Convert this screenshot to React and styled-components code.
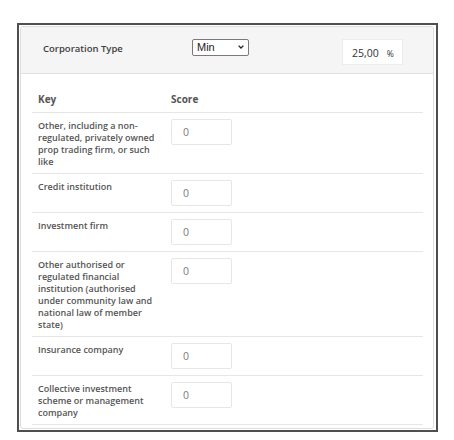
import React from "react";
import styled, { createGlobalStyle } from "styled-components";

const Global = createGlobalStyle`
  html, body {
    margin: 0;
    padding: 0;
    background: #fff;
  }
  body {
    font-family: "Open Sans", "Noto Sans", sans-serif;
  }
`;

const Frame = styled.div`
  margin: 23px 0 0 17px;
  width: 421px;
  box-sizing: border-box;
  border: 2px solid #4f4f4f;
  padding: 1px 2px 1px 1px;
  background: #fff;
`;

const Panel = styled.div`
  border: 1px solid #dedede;
  border-radius: 3px;
  overflow: hidden;
`;

const Header = styled.div`
  display: flex;
  align-items: flex-start;
  background: #f5f5f5;
  border-bottom: 1px solid #e2e2e2;
  height: 47px;
  box-sizing: border-box;
  padding: 12px 0 0 22px;
`;

const Label = styled.div`
  width: 149px;
  font-size: 9.5px;
  font-weight: 600;
  color: #3e3e3e;
  line-height: 14px;
  padding-top: 3px;
`;

const SelectWrap = styled.div`
  position: relative;
  width: 57px;
  height: 17px;
`;

const Select = styled.select`
  appearance: none;
  -webkit-appearance: none;
  display: block;
  width: 100%;
  height: 100%;
  box-sizing: border-box;
  font-family: "Liberation Sans", Arial, sans-serif;
  font-size: 11px;
  line-height: 15px;
  color: #1a1a1a;
  border: 1px solid #7a7a7a;
  border-radius: 2px;
  background: #fff;
  padding: 0 0 0 4px;
  margin: 0;
`;

const Chevron = styled.svg`
  position: absolute;
  right: 5px;
  top: 6px;
  width: 6px;
  height: 4px;
  pointer-events: none;
`;

const Percent = styled.div`
  margin-left: 93px;
  width: 61px;
  height: 26px;
  box-sizing: border-box;
  background: #fff;
  border: 1px solid #ececec;
  display: flex;
  align-items: center;
  padding: 2px 0 0 9px;
  gap: 8px;
  color: #333;
  font-size: 10.5px;
`;

const Unit = styled.span`
  font-size: 8.5px;
`;

const Body = styled.div`
  padding: 12px 10px 3px 11px;
`;

const Table = styled.table`
  width: 100%;
  border-collapse: collapse;
  table-layout: fixed;
`;

const Col = styled.col`
  width: ${(p) => p.$w || "auto"};
`;

const HeadCell = styled.th`
  text-align: left;
  font-size: 10px;
  font-weight: 700;
  color: #555;
  line-height: 14px;
  padding: 6px 6px 6px;
  border-bottom: 1px solid #e6e6e6;
`;

const Row = styled.tr`
  border-bottom: 1px solid #e6e6e6;
`;

const KeyCell = styled.td`
  vertical-align: top;
  padding: 7px 6px 5px;
  font-size: 9px;
  font-weight: 600;
  line-height: 12px;
  color: #555;
`;

const ScoreCell = styled.td`
  vertical-align: top;
  padding: 6px 6px 6px;
`;

const ScoreInput = styled.input`
  display: block;
  width: 61px;
  height: 26px;
  box-sizing: border-box;
  border: 1px solid #e6e6e6;
  border-radius: 2px;
  padding: 0 0 0 11px;
  font-family: "Open Sans", sans-serif;
  font-size: 10.5px;
  color: #7a7a7a;
  background: #fff;
  outline: none;
`;

const rows = [
  "Other, including a non-regulated, privately owned prop trading firm, or such like",
  "Credit institution",
  "Investment firm",
  "Other authorised or regulated financial institution (authorised under community law and national law of member state)",
  "Insurance company",
  "Collective investment scheme or management company",
];

export default function App() {
  return (
    <>
      <Global />
      <Frame>
        <Panel>
          <Header>
            <Label>Corporation Type</Label>
            <SelectWrap>
              <Select defaultValue="min">
                <option value="min">Min</option>
                <option value="max">Max</option>
              </Select>
              <Chevron viewBox="0 0 6 4">
                <path d="M0.6 0.6 L3 3 L5.4 0.6" fill="none" stroke="#222" strokeWidth="1.3" />
              </Chevron>
            </SelectWrap>
            <Percent>
              <span>25,00</span>
              <Unit>%</Unit>
            </Percent>
          </Header>
          <Body>
            <Table>
              <colgroup>
                <Col $w="133px" />
                <Col />
              </colgroup>
              <thead>
                <tr>
                  <HeadCell>Key</HeadCell>
                  <HeadCell>Score</HeadCell>
                </tr>
              </thead>
              <tbody>
                {rows.map((r) => (
                  <Row key={r}>
                    <KeyCell>{r}</KeyCell>
                    <ScoreCell>
                      <ScoreInput defaultValue="0" />
                    </ScoreCell>
                  </Row>
                ))}
              </tbody>
            </Table>
          </Body>
        </Panel>
      </Frame>
    </>
  );
}
